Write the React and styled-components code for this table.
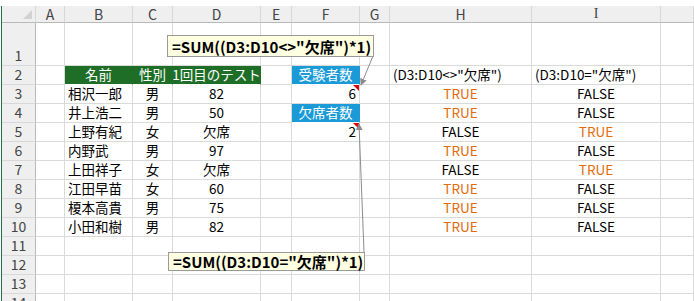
import React from "react";
import styled, { createGlobalStyle } from "styled-components";

const GlobalStyle = createGlobalStyle`
    html, body {
        margin: 0;
        padding: 0;
        background: #fff;
    }
    body {
        font-family: "Noto Sans CJK JP", "Noto Sans", sans-serif;
        font-size: 13.5px;
        color: #000;
    }
`;

const COLS = "34px 29px 68px 40px 88px 31px 68px 30px 142px 129px 1fr";

const Sheet = styled.div`
    position: relative;
    width: 694px;
    height: 301px;
    overflow: hidden;
    padding-top: 6px;
    box-sizing: border-box;
`;

const Grid = styled.div`
    margin-left: 1px;
    border-left: 1px solid #217346;
`;

const Row = styled.div`
    display: grid;
    grid-template-columns: ${COLS};
    height: ${(p) => p.$h || 19}px;
`;

const HeadCell = styled.div`
    box-sizing: border-box;
    background: #efefef;
    border-right: 1px solid #d8d8d8;
    border-bottom: 1px solid #b9b9b9;
    display: flex;
    align-items: center;
    justify-content: center;
    color: #444;
    font-size: 14px;
    line-height: 1;
    position: relative;
    font-family: ${(p) => (p.$serif ? '"Liberation Serif", serif' : "inherit")};
`;

const Corner = styled(HeadCell)`
    &::after {
        content: "";
        position: absolute;
        right: 3px;
        bottom: 3px;
        border-style: solid;
        border-width: 0 0 9px 9px;
        border-color: transparent transparent #d2d2d2 transparent;
    }
`;

const RowNum = styled.div`
    box-sizing: border-box;
    background: #efefef;
    border-right: 1px solid #b9b9b9;
    border-bottom: 1px solid #d8d8d8;
    display: flex;
    align-items: flex-end;
    justify-content: center;
    padding-bottom: 1px;
    color: #444;
    font-size: 14px;
    line-height: 17px;
`;

const Cell = styled.div`
    box-sizing: border-box;
    position: relative;
    background: ${(p) => p.$bg || "#fff"};
    border-right: 1px solid ${(p) => p.$bg || "#dadada"};
    border-bottom: 1px solid ${(p) => (p.$bg ? "#fff" : "#dadada")};
    color: ${(p) => p.$color || "#000"};
    display: flex;
    align-items: center;
    justify-content: ${(p) =>
        p.$align === "right" ? "flex-end" : p.$align === "center" ? "center" : "flex-start"};
    padding: 0 3px 1px;
    font-size: 13.5px;
    line-height: 17px;
    white-space: nowrap;

    ${(p) =>
        p.$note &&
        `
        &::after {
            content: "";
            position: absolute;
            top: 0;
            right: 0;
            border-style: solid;
            border-width: 0 6px 6px 0;
            border-color: transparent #e00000 transparent transparent;
        }
    `}
`;

const Note = styled.div`
    position: absolute;
    left: ${(p) => p.$x}px;
    top: ${(p) => p.$y}px;
    width: ${(p) => p.$w}px;
    height: ${(p) => p.$h}px;
    box-sizing: border-box;
    background: #ffffe1;
    border: 1px solid #9a9a9a;
    font-weight: bold;
    font-size: 15px;
    line-height: 1;
    display: flex;
    align-items: center;
    padding-left: 4px;
    white-space: nowrap;
`;

const Leaders = styled.svg`
    position: absolute;
    left: 0;
    top: 0;
    pointer-events: none;
`;

const GREEN = "#1e6e27";
const BLUE = "#1a9ad6";
const ORANGE = "#e26b0a";

const letters = ["A", "B", "C", "D", "E", "F", "G", "H", "I", ""];

const students = [
    { name: "相沢一郎", sex: "男", score: "82" },
    { name: "井上浩二", sex: "男", score: "50" },
    { name: "上野有紀", sex: "女", score: "欠席" },
    { name: "内野武", sex: "男", score: "97" },
    { name: "上田祥子", sex: "女", score: "欠席" },
    { name: "江田早苗", sex: "女", score: "60" },
    { name: "榎本高貴", sex: "男", score: "75" },
    { name: "小田和樹", sex: "男", score: "82" },
];

function Bool({ value }) {
    return (
        <Cell $align="center" $color={value ? ORANGE : "#000"}>
            {value ? "TRUE" : "FALSE"}
        </Cell>
    );
}

// side cells in column F for rows 3-5
const side = {
    0: <Cell $align="right" $note>6</Cell>,
    1: <Cell $align="center" $bg={BLUE} $color="#fff">欠席者数</Cell>,
    2: <Cell $align="right" $note>2</Cell>,
};

export default function App() {
    return (
        <>
            <GlobalStyle />
            <Sheet>
                <Grid>
                    <Row $h={17}>
                        <Corner />
                        {letters.map((l) => (
                            <HeadCell key={l} $serif={l === "I"}>
                                {l}
                            </HeadCell>
                        ))}
                    </Row>

                    <Row $h={43}>
                        <RowNum>1</RowNum>
                        {letters.map((l) => (
                            <Cell key={l} />
                        ))}
                    </Row>

                    <Row>
                        <RowNum>2</RowNum>
                        <Cell />
                        <Cell $align="center" $bg={GREEN} $color="#fff">名前</Cell>
                        <Cell $align="center" $bg={GREEN} $color="#fff">性別</Cell>
                        <Cell $align="center" $bg={GREEN} $color="#fff">1回目のテスト</Cell>
                        <Cell />
                        <Cell $align="center" $bg={BLUE} $color="#fff">受験者数</Cell>
                        <Cell />
                        <Cell>(D3:D10&lt;&gt;"欠席")</Cell>
                        <Cell>(D3:D10="欠席")</Cell>
                        <Cell />
                    </Row>

                    {students.map((s, i) => {
                        const absent = s.score === "欠席";
                        return (
                            <Row key={s.name}>
                                <RowNum>{i + 3}</RowNum>
                                <Cell />
                                <Cell>{s.name}</Cell>
                                <Cell $align="center">{s.sex}</Cell>
                                <Cell $align="center">{s.score}</Cell>
                                <Cell />
                                {side[i] || <Cell />}
                                <Cell />
                                <Bool value={!absent} />
                                <Bool value={absent} />
                                <Cell />
                            </Row>
                        );
                    })}

                    {[11, 12, 13, 14].map((n) => (
                        <Row key={n}>
                            <RowNum>{n}</RowNum>
                            {letters.map((l) => (
                                <Cell key={l} />
                            ))}
                        </Row>
                    ))}
                </Grid>

                <Leaders width="694" height="301">
                    <defs>
                        <marker id="tip" viewBox="0 0 10 10" refX="9" refY="5" markerWidth="7" markerHeight="7" orient="auto">
                            <path d="M0 0 L10 5 L0 10 z" fill="#8c8c8c" />
                        </marker>
                    </defs>
                    <line x1="373" y1="56" x2="361" y2="85" stroke="#8c8c8c" strokeWidth="1" markerEnd="url(#tip)" />
                    <line x1="364" y1="252" x2="359" y2="124" stroke="#8c8c8c" strokeWidth="1" markerEnd="url(#tip)" />
                </Leaders>

                <Note $x={167} $y={35} $w={207} $h={22}>=SUM((D3:D10&lt;&gt;"欠席")*1)</Note>
                <Note $x={168} $y={252} $w={197} $h={19}>=SUM((D3:D10="欠席")*1)</Note>
            </Sheet>
        </>
    );
}
